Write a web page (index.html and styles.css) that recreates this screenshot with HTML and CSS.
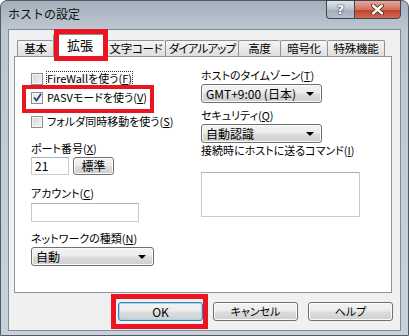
FILE: index.html
```html
<!DOCTYPE html>
<html lang="ja">
<head>
	<meta charset="UTF-8">
	<title>ホストの設定</title>
	<link rel="stylesheet" href="styles.css">
</head>
<body>
	<div class="window">
		<div class="titlebar">
			<span class="title">ホストの設定</span>
			<div class="caption">
				<span class="cap-help">?</span>
				<span class="cap-close">
					<svg width="13" height="11" viewBox="0 0 13 11"><path d="M2 1.5 L11 9.5 M11 1.5 L2 9.5" stroke="#4a2018" stroke-width="4" stroke-linecap="round"/><path d="M2 1.5 L11 9.5 M11 1.5 L2 9.5" stroke="#fff" stroke-width="2.4" stroke-linecap="round"/></svg>
				</span>
			</div>
		</div>

		<div class="client">
			<div class="tabs">
				<span class="tab">基本</span>
				<span class="tab active">拡張</span>
				<span class="tab">文字コード</span>
				<span class="tab">ダイアルアップ</span>
				<span class="tab">高度</span>
				<span class="tab">暗号化</span>
				<span class="tab">特殊機能</span>
			</div>

			<div class="panel">
				<div class="col col-left">
					<label class="check row-fw"><span class="box"></span><span class="focus">FireWallを使う(<u>F</u>)</span></label>
					<label class="check row-pasv"><span class="box checked"><svg width="9" height="9" viewBox="0 0 9 9"><path d="M1 4.5 L3.5 7.5 L8 0.8" fill="none" stroke="#2a3f8f" stroke-width="1.8"/></svg></span>PASVモードを使う(<u>V</u>)</label>
					<label class="check row-folder"><span class="box"></span>フォルダ同時移動を使う(<u>S</u>)</label>

					<div class="label lbl-port">ポート番号(<u>X</u>)</div>
					<div class="port-row">
						<span class="field port">21</span>
						<span class="btn small">標準</span>
					</div>

					<div class="label lbl-account">アカウント(<u>C</u>)</div>
					<span class="field account"></span>

					<div class="label lbl-net">ネットワークの種類(<u>N</u>)</div>
					<div class="combo net"><span>自動</span><i class="arrow"></i></div>
				</div>

				<div class="col col-right">
					<div class="label">ホストのタイムゾーン(<u>T</u>)</div>
					<div class="combo tz"><span>GMT+9:00 (日本)</span><i class="arrow"></i></div>

					<div class="label lbl-sec">セキュリティ(<u>Q</u>)</div>
					<div class="combo tz"><span>自動認識</span><i class="arrow"></i></div>

					<div class="label lbl-cmd">接続時にホストに送るコマンド(<u>I</u>)</div>
					<div class="field memo"></div>
				</div>
			</div>

			<div class="buttons">
				<span class="btn default">OK</span>
				<span class="btn">キャンセル</span>
				<span class="btn">ヘルプ</span>
			</div>
		</div>

		<!-- red callouts -->
		<div class="mark mark-tab"></div>
		<div class="mark mark-pasv"></div>
		<div class="mark mark-ok"></div>
	</div>
</body>
</html>
```

FILE: styles.css
```css
html,
body {
	margin: 0;
	padding: 0;
	background: #fff;
}

body {
	font-family: "Noto Sans CJK JP", sans-serif;
	font-size: 11px;
	font-feature-settings: "palt";
	color: #000;
}

.window {
	position: relative;
	box-sizing: border-box;
	width: 409px;
	height: 336px;
	border: 1px solid #505b66;
	border-radius: 7px 7px 0 0;
	background: linear-gradient(#a3afbb, #bcc7d2 28px, #c8d2dc);
	padding: 0 7px 4px 7px;
	display: flex;
	flex-direction: column;
}

.titlebar {
	height: 28px;
	display: flex;
	justify-content: space-between;
	align-items: flex-start;
}

.title {
	font-size: 12px;
	line-height: 16px;
	padding-top: 5px;
	color: #111;
	font-feature-settings: normal;
}

.caption {
	display: flex;
	margin-top: -1px;
}

.cap-help,
.cap-close {
	box-sizing: border-box;
	height: 19px;
	border: 1px solid #3b4651;
	display: flex;
	align-items: center;
	justify-content: center;
}

.cap-help {
	width: 28px;
	border-right: none;
	border-radius: 0 0 0 4px;
	background: linear-gradient(#dfe5ea, #b9c3cc 50%, #a2aeb9 51%, #b3bfca);
	color: #fff;
	font-family: "DejaVu Sans", sans-serif;
	font-weight: bold;
	font-size: 13px;
	text-shadow: 0 0 2px #2b3640, 0 0 1px #2b3640;
}

.cap-close {
	width: 47px;
	border-radius: 0 0 4px 0;
	background: linear-gradient(#e9a99b, #d2705e 50%, #c0402c 51%, #d36a4f);
}

.client {
	flex: 1;
	background: #f0f0f0;
	border: 1px solid #7e8b98;
	display: flex;
	flex-direction: column;
}

.tabs {
	height: 26px;
	display: flex;
	align-items: flex-end;
	padding-left: 8px;
}

.tab {
	box-sizing: border-box;
	height: 16px;
	line-height: 14px;
	font-size: 11.5px;
	letter-spacing: -0.3px;
	text-align: center;
	border: 1px solid #8d9199;
	border-bottom: none;
	border-right: none;
	border-radius: 2px 2px 0 0;
	background: linear-gradient(#f6f6f6, #e9e9e9 50%, #dedede);
	white-space: nowrap;
	overflow: hidden;
}

.tab:nth-child(1) { width: 36px; }
.tab:nth-child(3) { width: 58px; }
.tab:nth-child(4) { width: 73px; letter-spacing: -0.8px; }
.tab:nth-child(5) { width: 42px; }
.tab:nth-child(6) { width: 47px; }
.tab:nth-child(7) { width: 58px; }

.tab:last-child {
	border-right: 1px solid #8d9199;
}

.tab.active {
	position: relative;
	z-index: 1;
	width: 54px;
	height: 23px;
	margin-bottom: -1px;
	padding-top: 3px;
	font-size: 13px;
	letter-spacing: 0;
	background: #fff;
	border-right: 1px solid #8d9199;
}

.tab.active + .tab {
	border-left: none;
}

.panel {
	box-sizing: border-box;
	height: 237px;
	margin: 0 8px 0 5px;
	background: #fff;
	border: 1px solid #8d9199;
	display: flex;
	padding: 11px 0 0 16px;
}

.col {
	display: flex;
	flex-direction: column;
	align-items: flex-start;
}

.col-left {
	width: 170px;
	padding-top: 4px;
}

.check {
	display: flex;
	align-items: center;
	height: 13px;
	line-height: 13px;
	white-space: nowrap;
}

.box {
	box-sizing: border-box;
	width: 12px;
	height: 12px;
	margin-right: 4px;
	border: 1px solid #8e8f8f;
	background: linear-gradient(135deg, #d6d6d6, #f4f4f4);
	box-shadow: inset 0 0 0 1px #f4f4f4;
	display: flex;
	align-items: center;
	justify-content: center;
}

.box.checked {
	background: linear-gradient(135deg, #e6e6e6, #fbfbfb);
}

.focus {
	outline: 1px dotted #333;
	outline-offset: 0;
}

.row-pasv {
	margin-top: 6px;
}

.row-folder {
	margin-top: 11px;
}

.label {
	line-height: 14px;
	white-space: nowrap;
}

.lbl-port {
	margin-top: 13px;
}

.lbl-account {
	margin-top: 11px;
}

.lbl-net {
	margin-top: 9px;
}

.port-row {
	display: flex;
	gap: 4px;
	margin-top: 2px;
}

.field {
	box-sizing: border-box;
	display: block;
	background: #fff;
	border: 1px solid #c3ccd6;
	border-top-color: #a9b3bf;
}

.port {
	width: 38px;
	height: 18px;
	line-height: 16px;
	padding-left: 3px;
	font-size: 12px;
}

.account {
	width: 108px;
	height: 19px;
	margin-top: 3px;
}

.btn {
	box-sizing: border-box;
	width: 85px;
	height: 19px;
	line-height: 17px;
	text-align: center;
	border: 1px solid #707070;
	border-radius: 3px;
	background: linear-gradient(#f3f3f3, #ebebeb 48%, #dddddd 52%, #cfcfcf);
	box-shadow: inset 0 0 0 1px #fbfbfb;
}

.btn.small {
	width: 41px;
	height: 18px;
	line-height: 16px;
	font-size: 12px;
}

.btn.default {
	border-color: #3c7fb1;
	box-shadow: inset 0 0 0 1px #9fd6f3;
	font-size: 12px;
}

.combo {
	box-sizing: border-box;
	height: 19px;
	display: flex;
	align-items: center;
	justify-content: space-between;
	padding: 0 7px 0 4px;
	border: 1px solid #707070;
	border-radius: 3px;
	background: linear-gradient(#f3f3f3, #ebebeb 48%, #dddddd 52%, #cfcfcf);
	box-shadow: inset 0 0 0 1px #fbfbfb;
	white-space: nowrap;
	font-size: 12px;
}

.combo.net {
	width: 123px;
	margin-top: 2px;
}

.combo.tz {
	width: 121px;
	margin-top: 2px;
}

.arrow {
	width: 0;
	height: 0;
	border-left: 4px solid transparent;
	border-right: 4px solid transparent;
	border-top: 4px solid #000;
}

.col-right .lbl-sec {
	margin-top: 5px;
}

.memo {
	width: 159px;
	height: 45px;
	margin-top: 15px;
}

.buttons {
	display: flex;
	justify-content: flex-end;
	gap: 10px;
	padding: 9px 7px 0 0;
}

.mark {
	position: absolute;
	box-sizing: border-box;
	border: 5px solid #ea1520;
	z-index: 5;
}

.mark-tab {
	left: 53px;
	top: 28px;
	width: 54px;
	height: 32px;
}

.mark-pasv {
	left: 21px;
	top: 84px;
	width: 132px;
	height: 28px;
	border-width: 4px;
}

.mark-ok {
	left: 110px;
	top: 293px;
	width: 97px;
	height: 35px;
}
```
